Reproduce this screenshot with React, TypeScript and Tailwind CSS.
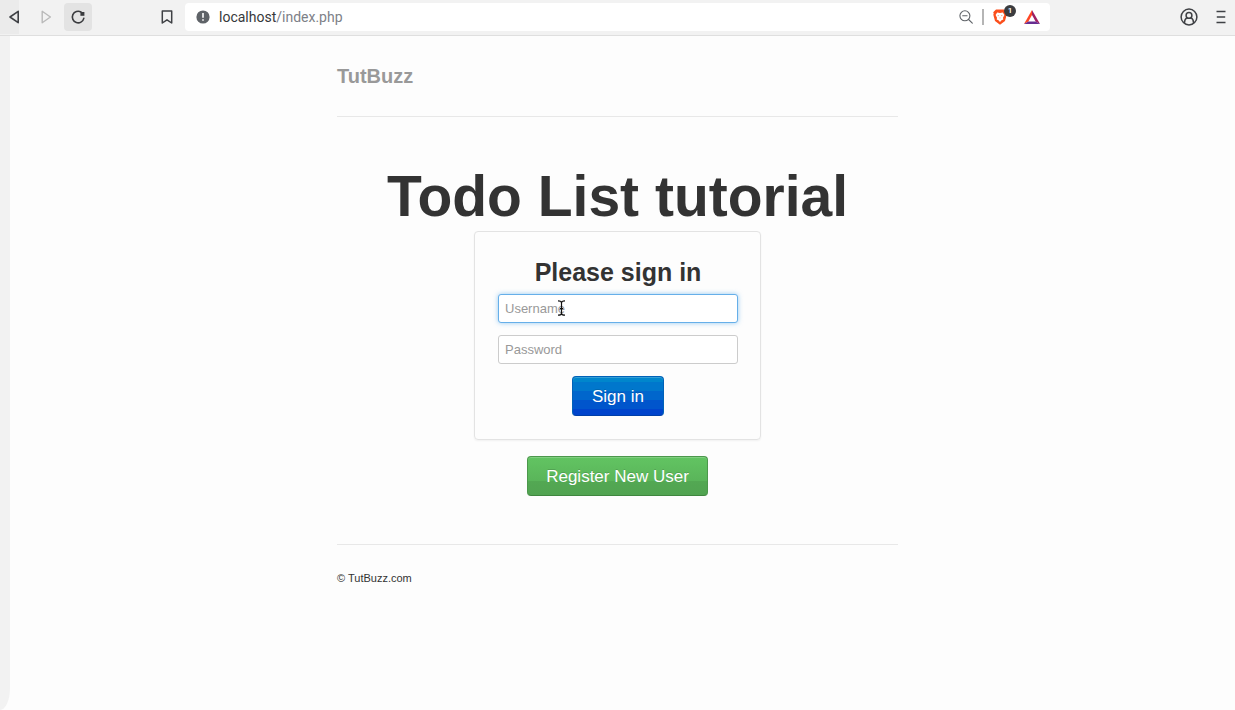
function BackIcon() {
  return (
    <svg width="12" height="14" viewBox="0 0 12 14" fill="none" stroke="#3f4145" strokeWidth="1.6" strokeLinejoin="round">
      <path d="M11.200 1.300v11.400L3 7z" />
    </svg>
  );
}

function ForwardIcon() {
  return (
    <svg width="12" height="14" viewBox="0 0 12 14" fill="none" stroke="#b9b9b9" strokeWidth="1.4" strokeLinejoin="round">
      <path d="M2.2 1.3v11.4L10.400 7z" />
    </svg>
  );
}

function ReloadIcon() {
  return (
    <svg width="16" height="16" viewBox="0 0 16 16" fill="none">
      <path d="M13.8 9.4A5.8 5.8 0 1 1 11 3" stroke="#3a3b3e" strokeWidth="1.6" strokeLinecap="round" />
      <path d="M10.4 3h4v3.800h-4z" fill="#3a3b3e" />
    </svg>
  );
}

function BookmarkIcon() {
  return (
    <svg width="12" height="14" viewBox="0 0 12 14" fill="none" stroke="#3f4145" strokeWidth="1.5" strokeLinejoin="round">
      <path d="M1.3 1h9.4v12L6 9.8 1.3 13z" />
    </svg>
  );
}

function InfoIcon() {
  return (
    <svg width="14" height="14" viewBox="0 0 14 14">
      <circle cx="7" cy="7" r="6.6" fill="#5f6368" />
      <path d="M6.2 3h1.6v4.8H6.2zM6.2 9.2h1.6v1.6H6.2z" fill="#fff" />
    </svg>
  );
}

function ZoomOutIcon() {
  return (
    <svg width="14" height="14" viewBox="0 0 14 14" fill="none" stroke="#5f6368" strokeWidth="1.1" strokeLinecap="round">
      <circle cx="5.9" cy="5.8" r="5" />
      <path d="M9.6 9.5l3.7 3.7M3.7 5.8h4.4" />
    </svg>
  );
}

function ShieldIcon() {
  return (
    <svg width="14" height="16" viewBox="0 0 14 16">
      <path d="M3 .6h8l2.8 2.6-.5 1.2.4 1.3-1.700 6.400L7 15.800l-5-3.700L.3 5.700l.4-1.300-.5-1.200z" fill="#fb4f1c" />
      <path d="M4.200 3.400L7 3.900l2.800-.5 1.600 2.500-1.400 2.900.3 1.800-1.800.700L7 12.900l-1.500-1.600-1.800-.7.3-1.800-1.400-2.900z" fill="#fff" />
      <path d="M4.200 6.300l1.700.1-.2.800zM9.800 6.300l-1.700.1.2.800zM6.300 8.800h1.400L7 9.500z" fill="#fb4f1c" />
    </svg>
  );
}

function RewardsIcon() {
  return (
    <svg width="16" height="14" viewBox="0 0 16 14">
      <path d="M8 0L0 14l4.4-2.6L8 5z" fill="#ff4724" />
      <path d="M8 0l8 14-4.4-2.6L8 5z" fill="#9e1f63" />
      <path d="M0 14h16l-4.4-2.6H4.4z" fill="#662d91" />
    </svg>
  );
}

function ProfileIcon() {
  return (
    <svg width="18" height="18" viewBox="0 0 18 18" fill="none" stroke="#3f4145" strokeWidth="1.5">
      <circle cx="9" cy="9" r="7.9" />
      <circle cx="9" cy="7.4" r="2.9" />
      <path d="M4.400 15c.1-2.600 1-4.300 2.700-5.300M13.600 15c-.1-2.600-1-4.300-2.700-5.300" />
    </svg>
  );
}

function MenuIcon() {
  return (
    <svg width="10" height="14" viewBox="0 0 10 14" stroke="#3f4145" strokeWidth="1.3">
      <path d="M.5 1.500h9M.8 7h8.400M.5 12.500h9" />
    </svg>
  );
}

function TextCursor() {
  return (
    <svg className="pointer-events-none absolute top-1.5 left-[59px]" width="9" height="16" viewBox="0 0 9 16" fill="none" stroke="#111" strokeWidth="1.2">
      <path d="M1 .8c2 0 3.500.6 3.500 2v10.400c0 1.400-1.500 2-3.500 2M8 .8c-2 0-3.500.6-3.500 2v10.400c0 1.400 1.500 2 3.500 2M3 8.500h3" />
    </svg>
  );
}

function BrowserBar() {
  return (
    <header className="flex h-9 items-center border-b border-[#dfdfdf] bg-[#f2f2f2] pr-[9px] pb-px font-[Roboto,sans-serif]">
      <button aria-label="Back" className="flex h-full w-[19px] items-center justify-end bg-[#ebebeb]">
        <BackIcon />
      </button>
      <button aria-label="Forward" className="ml-[21px] flex h-7 w-3 items-center">
        <ForwardIcon />
      </button>
      <button aria-label="Reload" className="ml-3 flex size-7 items-center justify-center rounded bg-[#e3e3e3]">
        <ReloadIcon />
      </button>
      <button aria-label="Bookmark this page" className="ml-[69px] flex h-7 items-center">
        <BookmarkIcon />
      </button>
      <div className="ml-3 flex h-7 min-w-0 flex-1 items-center rounded bg-white pr-[10px] pl-[11px]">
        <InfoIcon />
        <p className="ml-[9px] flex-1 text-sm text-[#7d8187]">
          <span className="text-[#37383b]">localhost</span>/index.php
        </p>
        <button aria-label="Zoom out">
          <ZoomOutIcon />
        </button>
        <span className="mx-[9px] h-4 w-0.5 bg-[#b5b5b5]" />
        <button aria-label="Shields" className="relative">
          <ShieldIcon />
          <span className="absolute -top-1 left-[11px] flex size-3 items-center justify-center rounded-full bg-[#3b3c3f] text-[8px] font-semibold text-white">
            1
          </span>
        </button>
        <button aria-label="Rewards" className="ml-[17px]">
          <RewardsIcon />
        </button>
      </div>
      <button aria-label="Profile" className="ml-[130px]">
        <ProfileIcon />
      </button>
      <button aria-label="Menu" className="ml-[18px]">
        <MenuIcon />
      </button>
    </header>
  );
}

function SignInCard() {
  const field =
    "h-[29px] w-full rounded-[3px] border bg-white px-1.5 text-[13px] text-[#555] outline-none placeholder:text-[#999]";
  return (
    <form className="flex w-[287px] flex-col items-center rounded border border-[#e3e3e3] px-[23px] pt-6 pr-[22px] pb-[23px] shadow-[0_1px_2px_rgba(0,0,0,0.05)]">
      <h2 className="text-[25px] leading-8 font-bold">Please sign in</h2>
      <div className="relative mt-1.5 w-full">
        <input
          aria-label="Username"
          placeholder="Username"
          className={`${field} border-[#66afe9] shadow-[0_0_5px_rgba(82,168,236,0.6)]`}
        />
        <TextCursor />
      </div>
      <input type="password" aria-label="Password" placeholder="Password" className={`${field} mt-3 border-[#ccc]`} />
      <button
        type="submit"
        className="mt-3 h-10 rounded border border-[#0062b8] border-b-[#003fa8] bg-[linear-gradient(#0086cc_14%,#0077cc_14%_37%,#0066cc_37%_60%,#0055cc_60%_83%,#0044cc_83%)] px-[19px] pt-0.5 text-[17px] text-white shadow-[inset_0_1px_0_rgba(255,255,255,0.2)] [text-shadow:0_-1px_0_rgba(0,0,0,0.15)]"
      >
        Sign in
      </button>
    </form>
  );
}

export default function App() {
  return (
    <div className="flex min-h-screen flex-col bg-[#fdfdfd] font-['Liberation_Sans',Arial,sans-serif] text-[#333]">
      <BrowserBar />
      <div className="flex flex-1">
        <div className="w-[10px] rounded-br-[10px_22px] bg-[#f2f2f2]" />
        <main className="flex-1 pr-[10px]">
          <div className="mx-auto max-w-[561px] pt-6">
            <h3 className="text-xl leading-8 font-bold text-[#999]">TutBuzz</h3>
            <hr className="mt-6 border-[#e8e8e8]" />
            <section className="mt-12 flex flex-col items-center">
              <h1 className="pb-1 text-[57px] leading-[62px] font-bold">Todo List tutorial</h1>
              <SignInCard />
              <button className="mt-4 h-10 rounded border border-[#4c984c] border-b-[#3f863f] bg-[linear-gradient(#62c462,#5ab55a_62%,#53a853_62%,#51a351)] px-[18px] pt-0.5 text-[17px] text-white shadow-[inset_0_1px_0_rgba(255,255,255,0.2)] [text-shadow:0_-1px_0_rgba(0,0,0,0.15)]">
                Register New User
              </button>
            </section>
            <hr className="mt-12 border-[#e8e8e8]" />
            <footer className="mt-6 text-[11px] leading-[18px]">
              <p>© TutBuzz.com</p>
            </footer>
          </div>
        </main>
      </div>
    </div>
  );
}
